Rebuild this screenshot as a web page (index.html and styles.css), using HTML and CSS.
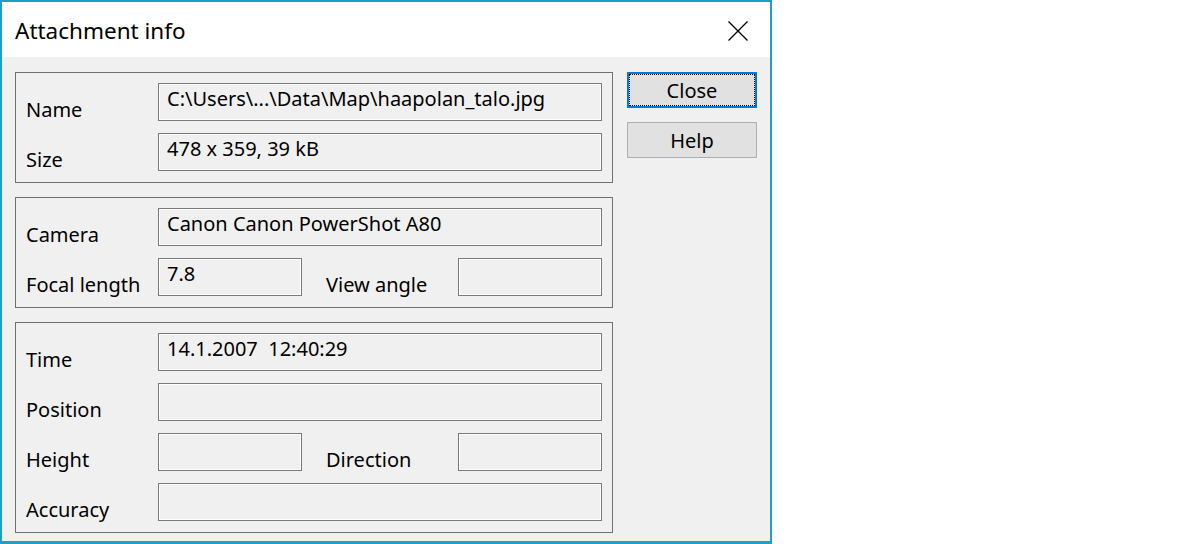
FILE: index.html
```html
<!DOCTYPE html>
<html>
<head>
<meta charset="utf-8">
<link rel="stylesheet" href="styles.css">
</head>
<body>
<div class="window">
  <div class="titlebar">
    <div class="title">Attachment info</div>
    <svg class="close-x" width="20" height="20" viewBox="0 0 20 20"><path d="M0.5 0.5 L19.5 19.5 M19.5 0.5 L0.5 19.5" stroke="#000" stroke-width="1.3" fill="none"/></svg>
  </div>
  <div class="body">
    <div class="groups">
      <div class="group">
        <div class="label">Name</div>
        <div class="field wide">C:\Users\...\Data\Map\haapolan_talo.jpg</div>
        <div class="label">Size</div>
        <div class="field wide">478 x 359, 39 kB</div>
      </div>
      <div class="group">
        <div class="label">Camera</div>
        <div class="field wide">Canon Canon PowerShot A80</div>
        <div class="label">Focal length</div>
        <div class="field">7.8</div>
        <div class="label second">View angle</div>
        <div class="field"></div>
      </div>
      <div class="group">
        <div class="label">Time</div>
        <div class="field wide">14.1.2007&nbsp; 12:40:29</div>
        <div class="label">Position</div>
        <div class="field wide"></div>
        <div class="label">Height</div>
        <div class="field"></div>
        <div class="label second">Direction</div>
        <div class="field"></div>
        <div class="label">Accuracy</div>
        <div class="field wide"></div>
      </div>
    </div>
    <div class="buttons">
      <div class="btn default">Close</div>
      <div class="btn">Help</div>
    </div>
  </div>
</div>
</body>
</html>
```
FILE: styles.css
```css
html, body {
  margin: 0;
  padding: 0;
  background: #ffffff;
}
body {
  font-family: "Noto Sans", "Open Sans", sans-serif;
  font-size: 20px;
  color: #000;
}
.window {
  width: 772px;
  height: 544px;
  box-sizing: border-box;
  border: 2px solid #1ba1c4;
  border-bottom-width: 3px;
  background: #f0f0f0;
  display: flex;
  flex-direction: column;
}
.titlebar {
  height: 55px;
  background: #ffffff;
  display: flex;
  align-items: center;
  justify-content: space-between;
  padding: 0 22px 0 13px;
}
.title {
  font-size: 22.5px;
  padding-top: 1px;
}
.close-x {
  display: block;
  margin-top: 2px;
}
.body {
  display: flex;
  gap: 14px;
  padding: 15px 0 0 13px;
}
.groups {
  display: flex;
  flex-direction: column;
  gap: 14px;
  width: 598px;
}
.group {
  border: 1px solid #707070;
  padding: 10px 10px 11px 10px;
  display: grid;
  grid-template-columns: 132px 144px 24px 132px 144px;
  grid-auto-rows: 38px;
  row-gap: 12px;
}
.label {
  grid-column: 1;
  line-height: 24px;
  padding-top: 15px;
  white-space: nowrap;
}
.label.second {
  grid-column: 4;
}
.field {
  box-sizing: border-box;
  border: 1px solid #7a7a7a;
  box-shadow: inset -1px -1px 0 #ffffff, inset 1px 1px 0 #ffffff;
  padding: 3px 0 0 8px;
  line-height: 24px;
  white-space: nowrap;
  overflow: hidden;
}
.field.wide {
  grid-column: 2 / 6;
}
.buttons {
  display: flex;
  flex-direction: column;
  gap: 14px;
}
.btn {
  width: 130px;
  height: 36px;
  box-sizing: border-box;
  background: #e1e1e1;
  border: 1px solid #adadad;
  display: flex;
  align-items: center;
  justify-content: center;
  position: relative;
}
.btn.default {
  border: 2px solid #0078d7;
}
.btn.default::after {
  content: "";
  position: absolute;
  inset: 0;
  border: 1px dotted #000;
}
```
